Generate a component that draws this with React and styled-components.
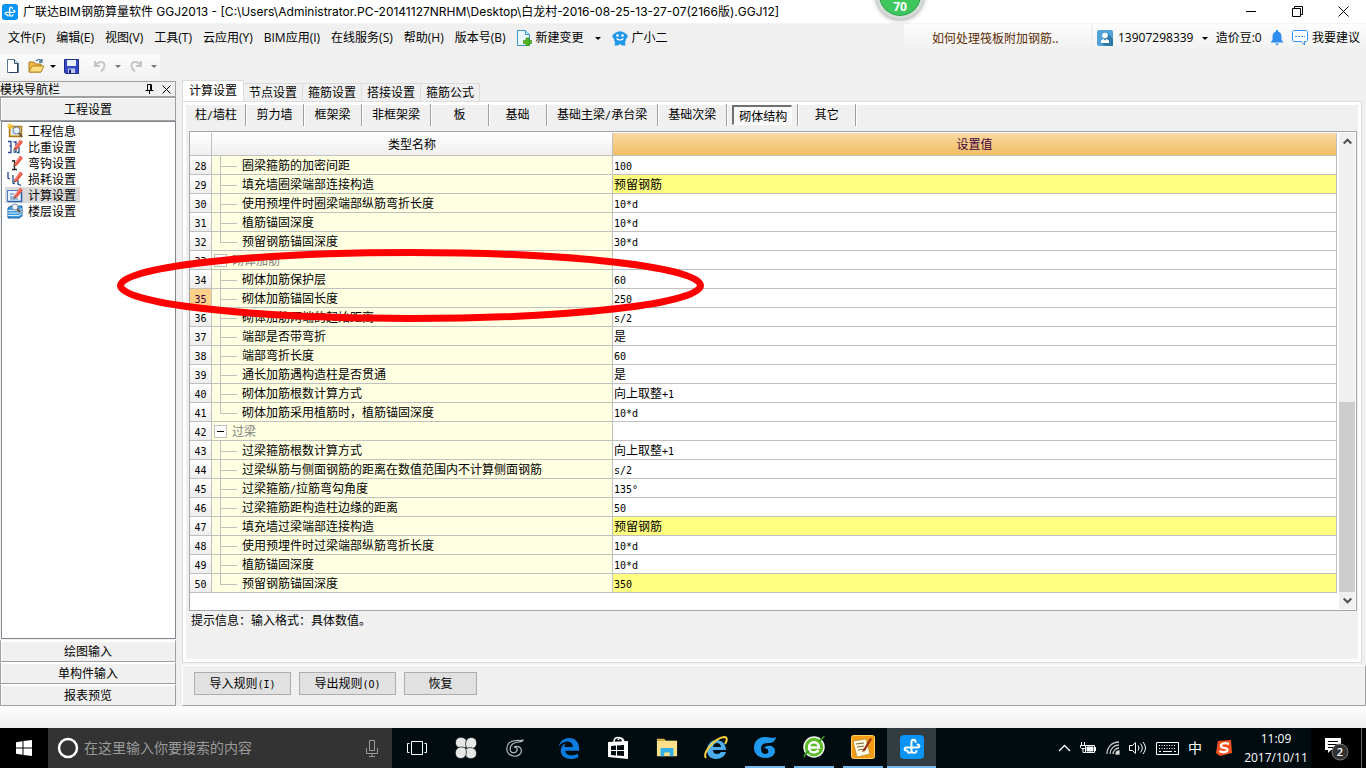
import React from "react";
import styled, { createGlobalStyle, css } from "styled-components";

const UI = '"Open Sans", "Noto Sans CJK SC", sans-serif';
const SONG = '"Noto Sans CJK SC", sans-serif';
const LINE = "#c0c0c0";

const Global = createGlobalStyle`
  * { box-sizing: border-box; }
  body { margin: 0; background: #f0f0f0; color: #000; font: 12px/16px ${SONG}; }
  button, input { font: inherit; color: inherit; border: 0; padding: 0; margin: 0; background: none; border-radius: 0; }
  button { white-space: nowrap; }
`;

const Page = styled.div`
  position: relative;
  display: flex;
  flex-direction: column;
  min-height: 100vh;
  overflow: hidden;
`;

const Svg = styled.svg`
  display: block;
  flex: none;
`;

const Mono = styled.span`
  font-family: "DejaVu Sans Mono", monospace;
  font-size: 10px;
  line-height: 10px;
`;

const Mixed = ({ children }) =>
  children.split(/([\x21-\x7e°]+)/).map((part, i) => (i % 2 ? <Mono key={i}>{part}</Mono> : part));

/* ---------- Title bar ---------- */

const TitleBar = styled.header`
  display: flex;
  align-items: center;
  height: 24px;
  padding-left: 2px;
  gap: 5px;
  background: #fff;
  border-bottom: 1px solid #f4f4f4;
`;

const Title = styled.h1`
  flex: 1;
  margin: 0;
  font: 400 12px/16px Inter, "Noto Sans CJK SC", sans-serif;
  white-space: nowrap;
`;

const WindowButton = styled.button`
  display: grid;
  place-items: center;
  width: 46px;
  height: 22px;
`;

const ScoreBadge = styled.div`
  position: absolute;
  top: -29px;
  left: 876px;
  width: 48px;
  height: 48px;
  padding-top: 27px;
  border: 3px solid #d4dcd6;
  border-radius: 50%;
  background: #3fc75f;
  box-shadow: 0 1px 5px rgba(0, 0, 0, 0.4), inset 0 0 0 1px #2a9a48;
  color: #fff;
  font: bold 12px/12px "Open Sans", sans-serif;
  text-align: center;
`;

/* ---------- Menu ---------- */

const MenuBar = styled.nav`
  display: flex;
  align-items: center;
  height: 28px;
  padding-left: 8px;
  font-family: ${UI};
`;

const MenuList = styled.div`
  display: flex;
  flex: 1;
  align-items: center;
  gap: 11px;
`;

const MenuButton = styled.button`
  display: flex;
  align-items: center;
  gap: ${(p) => p.$gap || 0}px;
`;

const Promo = styled.a`
  width: 187px;
  height: 28px;
  padding-left: 28px;
  line-height: 28px;
  background: linear-gradient(#fdfdfd, #f0f0f0);
  color: #5c2c04;
  font-family: ${SONG};
  text-decoration: none;
`;

const Account = styled.div`
  display: flex;
  align-items: center;
  justify-content: space-between;
  width: 273px;
  height: 28px;
  margin-left: 2px;
  padding: 0 6px 0 4px;
  background: linear-gradient(#fdfdfd, #f0f0f0);
`;

const Caret = styled.span`
  width: 0;
  height: 0;
  border: 3px solid transparent;
  border-top-color: ${(p) => p.$color || "#000"};
  border-bottom: 0;
`;

const ToolBar = styled.div`
  display: flex;
  align-items: center;
  align-self: flex-start;
  width: 160px;
  height: 24px;
  margin: 2px 0 2px;
  padding-left: 6px;
  background: linear-gradient(#fbfbfb, #f3f3f3);
`;

const ToolButton = styled.button`
  display: flex;
  align-items: center;
  gap: ${(p) => p.$gap || 5}px;
  margin-right: 8px;
`;

const ToolDivider = styled.span`
  width: 1px;
  height: 22px;
  margin: 0 8px 0 -2px;
  background: #a8a8a8;
`;

/* ---------- Side navigation ---------- */

const Workspace = styled.div`
  position: relative;
  display: flex;
  flex: 1;
  gap: 6px;
`;

const Side = styled.aside`
  display: flex;
  flex-direction: column;
  flex: none;
  width: 176px;
  padding-top: 1px;
`;

const SideTitle = styled.div`
  display: flex;
  align-items: center;
  height: 16px;
  padding-right: 4px;
  border: 1px solid #a0a0a0;
  border-left: 0;
  gap: 8px;
`;

const SideHeading = styled.h2`
  flex: 1;
  margin: 0;
  font: 12px/14px ${SONG};
`;

const SideTab = styled.button`
  height: ${(p) => (p.$tall ? 24 : 22)}px;
  padding-bottom: 1px;
  border: 1px solid #a0a0a0;
  border-top-color: ${(p) => (p.$tall ? "#a0a0a0" : "#fff")};
  box-shadow: inset 1px 1px #fff;
`;

const Tree = styled.ul`
  flex: 1;
  margin: 0 0 1px 1px;
  padding: 1px 0 0 3px;
  border: 1px solid #828790;
  background: #fff;
  list-style: none;
`;

const TreeItem = styled.button`
  display: flex;
  align-items: center;
  gap: 5px;
  height: 16px;
  padding: 0 4px 0 2px;
  background: ${(p) => (p.$active ? "#d9d9d9" : "transparent")};
  line-height: 16px;
`;

/* ---------- Main area ---------- */

const Main = styled.main`
  display: flex;
  flex: 1;
  flex-direction: column;
  min-width: 0;
`;

const Tabs = styled.div`
  display: flex;
  align-items: flex-end;
  height: 21px;
`;

const Tab = styled.button`
  height: ${(p) => (p.$active ? 21 : 18)}px;
  width: ${(p) => (p.$active ? 62 : 59)}px;
  padding-bottom: 2px;
  border: 1px solid #dcdcdc;
  border-left-width: ${(p) => (p.$active ? 1 : 0)}px;
  border-bottom: 0;
  background: ${(p) => (p.$active ? "#fff" : "#f0f0f0")};
  line-height: 16px;
`;

const TabPage = styled.section`
  display: flex;
  flex: 1;
  flex-direction: column;
  margin-right: 4px;
  padding: 0 4px;
  border: 1px solid #dcdcdc;
  box-shadow: inset 0 0 0 3px #fff;
`;

const SubTabs = styled.div`
  display: flex;
  align-items: center;
  height: 26px;
`;

const SubTabCell = styled.div`
  display: grid;
  place-items: center;
  min-width: 58px;
  height: 22px;
  padding: 0 ${(p) => (p.$active ? 5 : p.$tight ? 8 : 10)}px;
  border-right: 1px solid #a0a0a0;
  box-shadow: 1px 0 #fff;
`;

const SubTab = styled.button`
  height: 20px;
  padding-bottom: 2px;
  ${(p) =>
    p.$active &&
    css`
      padding: 0 4px 0 5px;
      border: 1px solid #fff;
      border-top: 2px solid #707070;
      border-left: 2px solid #707070;
      background: #f8f8f8;
    `}
`;

const Grid = styled.div`
  display: flex;
  flex: 1;
  align-items: stretch;
  margin: 3px 0 0 2px;
  padding: 1px 1px 1px 0;
  border: 1px solid #a5a5ad;
  background: #fff;
`;

const Table = styled.table`
  flex: 1;
  align-self: flex-start;
  table-layout: fixed;
  width: 100%;
  border-spacing: 0;
`;

const Th = styled.th`
  height: 23px;
  padding: 0;
  border-right: 1px solid ${LINE};
  border-bottom: 1px solid ${LINE};
  background: ${(p) => (p.$hot ? "linear-gradient(#fad9a4, #f0be62)" : "linear-gradient(#fff, #efefef)")};
  color: ${(p) => (p.$hot ? "#400040" : "#000")};
  font-weight: 400;
`;

const cell = css`
  height: 19px;
  padding: 0;
  border-right: 1px solid ${LINE};
  border-bottom: 1px solid ${LINE};
  line-height: 16px;
  white-space: nowrap;
`;

const RowNumber = styled.th`
  ${cell}
  background: ${(p) => (p.$hot ? "#ffd088" : "linear-gradient(#fff, #eee)")};
  color: ${(p) => (p.$hot ? "#400040" : "#000")};
  font-weight: 400;
  text-align: center;
`;

const NameCell = styled.td`
  ${cell}
  background: #ffffe1;
`;

const ValueCell = styled.td`
  ${cell}
  padding: 0 0 1px 1px;
  background: ${(p) => (p.$edited ? "#ffff80" : "#fff")};
`;

const NameLine = styled.div`
  display: flex;
  align-items: center;
  height: 18px;
  padding-left: ${(p) => (p.$group ? 2 : 8)}px;
  gap: 5px;
  color: ${(p) => (p.$group ? "#808080" : "#000")};
`;

const Branch = styled.span`
  width: 17px;
  height: 18px;

  &::before,
  &::after {
    display: block;
    height: 9px;
    border-left: 1px solid ${LINE};
    content: "";
  }
  &::before {
    height: 10px;
    border-bottom: 1px solid ${LINE};
  }
  &::after {
    height: 8px;
    border-left-color: ${(p) => (p.$last ? "transparent" : LINE)};
  }
`;

const Collapse = styled.button`
  display: grid;
  place-items: center;
  width: 13px;
  height: 13px;
  border: 1px solid ${LINE};
  background: #fff;
`;

const ScrollBar = styled.div`
  display: flex;
  flex: none;
  flex-direction: column;
  width: 16px;
  margin-left: 2px;
  background: #f0f0f0;
`;

const ScrollButton = styled.button`
  display: grid;
  place-items: center;
  height: 17px;
`;

const ScrollTrack = styled.div`
  display: flex;
  flex: 1;
  align-items: flex-end;
`;

const ScrollThumb = styled.div`
  width: 100%;
  height: 43%;
  background: #cdcdcd;
`;

const Hint = styled.p`
  height: 51px;
  margin: 0;
  padding: 1px 0 0 4px;
`;

const Actions = styled.footer`
  display: flex;
  gap: 8px;
  height: 41px;
  margin-top: 2px;
  padding: 6px 0 0 11px;
  border: 1px solid #a0a0a0;
  border-top-color: #fff;
  border-left-color: #fff;
`;

const ActionButton = styled.button`
  width: ${(p) => (p.$small ? 73 : 97)}px;
  height: 23px;
  padding-bottom: 2px;
  border: 1px solid #adadad;
  background: #e1e1e1;
`;

const Mark = styled.svg`
  position: absolute;
  top: 169px;
  left: 117px;
  width: 587px;
  height: 73px;
  pointer-events: none;
`;

const StatusBar = styled.div`
  height: 22px;
  background: linear-gradient(#fdfdfd, #f0f0f0);
`;

/* ---------- Taskbar ---------- */

const TaskBar = styled.footer`
  display: flex;
  height: 40px;
  background: #000c10;
  color: #fff;
  font-family: ${UI};
`;

const StartButton = styled.button`
  display: grid;
  place-items: center;
  width: 48px;
  background: #000;
`;

const Search = styled.label`
  display: flex;
  align-items: center;
  width: 344px;
  padding: 0 14px 0 9px;
  gap: 5px;
  background: #333;
`;

const SearchInput = styled.input`
  flex: 1;
  min-width: 0;
  font-size: 14px;
  outline: 0;

  &::placeholder {
    color: #9a9a9a;
    opacity: 1;
  }
`;

const Apps = styled.div`
  display: flex;
  flex: 1;
  gap: 5px;
`;

const AppGroup = styled.div`
  display: flex;
`;

const AppButton = styled.button`
  display: grid;
  place-items: center;
  width: 49px;
  height: 40px;
  background: ${(p) => (p.$active ? "#333c40" : "transparent")};
  ${(p) =>
    (p.$running || p.$active) &&
    css`
      grid-template-rows: 38px 2px;
      &::after {
        width: ${p.$active ? 49 : 40}px;
        height: 2px;
        background: #76b9ed;
        content: "";
      }
    `}
`;

const Tray = styled.div`
  display: flex;
  align-items: center;
`;

const TrayIcons = styled.div`
  display: flex;
  align-items: center;
  gap: 9px;
  margin-right: 9px;
`;

const TrayText = styled.span`
  margin-right: 5px;
  font-size: 14px;
`;

const Clock = styled.time`
  width: 70px;
  font: 12px/19px "Open Sans", sans-serif;
  text-align: center;
`;

const Notice = styled.button`
  display: flex;
  align-items: center;
  justify-content: flex-end;
  width: 50px;
  height: 40px;
  padding-right: 11px;
  background: #000;
`;

const ShowDesktop = styled.button`
  width: 5px;
  height: 40px;
  border-left: 1px solid #666;
  background: #000;
`;

/* ---------- Icons ---------- */

const BrandIcon = ({ size }) => (
  <Svg width={size} height={size} viewBox="0 0 24 24" fill="none" stroke="#fff" strokeWidth="2" strokeLinecap="round">
    <rect width="24" height="24" rx="4" fill="#0a94f5" stroke="none" />
    <path d="M15.500 7c0-3-4-3-4 0v8.500c0 3-4 3-4 .5M17.500 9.500c2.500 0 2.500 3 0 3h-11c-2.500 0-2.500 3 0 3M11.500 16c1 3 4.500 2.500 5 0" />
  </Svg>
);

const PageIcon = () => (
  <Svg width="14" height="16" viewBox="0 0 14 16">
    <path d="M1.500 1.500h7l4 4v9h-11z" fill="#fff" stroke="#5a7894" />
    <path d="M8.500 1.500v4h4" fill="#d4e4f2" stroke="#33556f" />
    <path d="M11.500 6v8.500H3" fill="none" stroke="#26425e" />
  </Svg>
);

const OpenIcon = () => (
  <Svg width="17" height="16" viewBox="0 0 17 16">
    <path d="M1 14V4h5l1 2h6v8z" fill="#f0bd42" stroke="#a8791b" />
    <path d="M1 14l3-6h12l-3 6z" fill="#ffdf80" stroke="#b38422" />
    <path d="M8 3q4-3 6 1m0-3v3h-3" fill="none" stroke="#4c7598" strokeWidth="1.300" />
  </Svg>
);

const SaveIcon = () => (
  <Svg width="15" height="15" viewBox="0 0 15 15">
    <path d="M.5.5h14v14h-13l-1-1z" fill="#3549c8" stroke="#202d86" />
    <path d="M3 1h9v6H3z" fill="#e8f0ff" />
    <path d="M4 9.500h7V14H4z" fill="#bfc9e8" />
    <path d="M5 10.500h2V14H5z" fill="#18236b" />
  </Svg>
);

const UndoIcon = ({ flip }) => (
  <Svg width="14" height="14" viewBox="0 0 14 14" transform={flip ? "scale(-1 1)" : undefined}>
    <path d="M2 2v5h5M2.500 6.500C5 1.500 11.500 2 11.500 6.500c0 3-2 4.500-3.500 6" fill="none" stroke="#c6c6c6" strokeWidth="2" />
  </Svg>
);

const ChangeIcon = () => (
  <Svg width="15" height="16" viewBox="0 0 15 16">
    <path d="M.5.5h8l4 4v11H.5z" fill="#eaf7ff" stroke="#3b94c9" />
    <path d="M8.500.5v4h4" fill="#bce3f8" stroke="#3b94c9" />
    <path d="M9 8h3v2.500h2.500v3H12V16H9v-2.500H6.500v-3H9z" fill="#52b51d" stroke="#2b8808" strokeWidth=".6" />
  </Svg>
);

const MascotIcon = () => (
  <Svg width="16" height="16" viewBox="0 0 16 16">
    <path d="M3 3q5-3.500 10 0l2.500 2v2.500L14 9q0 2-1 3l.5 3.500H10L8 14l-2 1.500H2.500L3 12Q2 11 2 9L.5 7.500V5z" fill="#2098e8" />
    <circle cx="5.500" cy="5.500" r="1.300" fill="#fff" />
    <circle cx="10.500" cy="5.500" r="1.300" fill="#fff" />
    <path d="M4.500 8.500q3.500 3 7 0" fill="none" stroke="#fff" strokeWidth="1.200" />
  </Svg>
);

const AvatarIcon = () => (
  <Svg width="16" height="16" viewBox="0 0 16 16">
    <rect width="16" height="16" rx="2" fill="#4fa3d8" />
    <path d="M11 4l5 5v7H8l-4-3z" fill="#2e7ba8" />
    <circle cx="8" cy="5.500" r="2.800" fill="#fff" />
    <path d="M4 13v-2.500L6.500 9 8 10.500 9.500 9l2.500 1.500V13z" fill="#fff" />
  </Svg>
);

const BellIcon = () => (
  <Svg width="14" height="16" viewBox="0 0 14 16" fill="#2f8cf0">
    <path d="M6 0h2v1.500q3.500 1 3.500 5V10l2 2.500H.5L2.500 10V6.500q0-4 3.500-5zM5 13.500h4L7 15.500z" />
  </Svg>
);

const BubbleIcon = () => (
  <Svg width="16" height="16" viewBox="0 0 16 16" fill="#fff" stroke="#2f8cf0">
    <path d="M1.500.5h13l1 1v9l-1 1h-2V15l-3-3.500h-8l-1-1v-9z" />
    <path d="M3 6.500h10" strokeDasharray="2 1" />
  </Svg>
);

const Pencil = () => (
  <>
    <path d="M7 9L13 .5 16 3 10 10.500z" fill="#ed5546" />
    <path d="M8.500 8L14 1.500" stroke="#ff9d8f" />
    <path d="M7 9l3 1.500L6 12z" fill="#7b5a48" />
  </>
);

const treeArt = {
  info: (
    <>
      <path d="M2.500 3.500h12v10h-12z" fill="#f3d27a" stroke="#ad7b1c" strokeWidth="1.500" />
      <path d="M4 12h9V6H4z" fill="#d8e8fa" />
      <circle cx="9.500" cy="7.500" r="3.500" fill="#e5f2ff" stroke="#69839c" />
      <path d="M12 10l3 4" stroke="#67503a" strokeWidth="2" />
      <path d="M3 0v6M0 3h6M1 1l4 4M5 1L1 5" stroke="#ffc629" />
    </>
  ),
  weight: (
    <>
      <path d="M1 2.500h3v4.500H2.500 4v6.500H1M6.500 3h2.500v10H6.500M12 8v5.500h-2" fill="none" stroke="#254a90" strokeWidth="1.300" />
      <Pencil />
    </>
  ),
  hook: (
    <>
      <path d="M7.500 5v9M5 14.500h5M5 6h3" fill="none" stroke="#222" strokeWidth="1.300" />
      <Pencil />
    </>
  ),
  loss: (
    <>
      <path d="M1 1v6l2 1M6 4v8l2 1M11 9v4l3 1.500" fill="none" stroke="#254a90" strokeWidth="1.300" />
      <Pencil />
    </>
  ),
  calc: (
    <>
      <rect x=".5" y="3.500" width="14" height="11" fill="#e8f1ff" stroke="#4b7cc0" />
      <path d="M3 7h4M3 10h3M3 12h8" stroke="#5178b0" />
      <path d="M14.500 5v9.500H1" fill="none" stroke="#2b62af" strokeWidth="1.500" />
      <Pencil />
    </>
  ),
  floor: (
    <>
      <path d="M1 5l3-2h11v10l-3 2H1z" fill="#429ade" stroke="#19619e" />
      <path d="M1 7.500h11l3-2M1 10h11l3-2M1 12.500h11l3-2" fill="none" stroke="#d6efff" />
      <circle cx="8" cy="4" r="3" fill="#eef6fc" stroke="#8194a7" />
      <path d="M10 6l3 3" stroke="#70563d" strokeWidth="2" />
    </>
  ),
};

const Chevron = ({ up }) => (
  <Svg width="9" height="7" viewBox="0 0 9 7" fill="none" stroke="#505050" strokeWidth="2">
    <path d={up ? "M.7 5.500l3.800-3.800 3.800 3.800" : "M.7 1.500l3.800 3.800 3.800-3.800"} />
  </Svg>
);

const taskArt = {
  view: (
    <g fill="none" stroke="#fff">
      <path d="M6.500 5.500h11v13h-11zM4.500 7.500h-2v9h2M19.500 7.500h2v9h-2" />
    </g>
  ),
  pinwheel: (
    <g fill="#e6e8e8" stroke="#000c10" strokeWidth=".7">
      <path d="M12 11.500C6 14 1 11 1.500 6 2 1.500 7 .5 10 2c3.500 2 3.500 6 2 9.500z" />
      <path d="M12.500 12C10 6 13 1 18 1.500c4.500.5 5.500 5.500 4 8.500-2 3.500-6 3.500-9.500 2z" />
      <path d="M12 12.500c6-2.500 11 .5 10.500 5.500-.5 4.500-5.500 5.500-8.500 4-3.500-2-3.500-6-2-9.500z" />
      <path d="M11.500 12c2.500 6-.5 11-5.500 10.500C1.500 22 .5 17 2 14c2-3.500 6-3.500 9.500-2z" />
    </g>
  ),
  swirl: (
    <g fill="none" stroke="#b9bfc0" strokeWidth="1.300">
      <path d="M21 3c-2 2-5 0-8 1C6 4 3 8 3 13c0 5 4 8 9 8 4 0 7-3 7-6 0-4-4-6-8-4 3 0 4 2 3 4-1 3-6 3-7 0-1-4 1-8 6-9 4-1 7 0 8-3z" />
    </g>
  ),
  edge: (
    <path
      d="M1 10C2 4 7 1 12 1c7 0 11 5 11 11v3H8c0 4 4 5 7 5 3 0 5-1 7-2v4c-2 1-5 2-8 2-7 0-11-4-11-9 0-4 2-7 6-8-1 1-2 2-2 4h9c0-4-2-6-6-6-4 0-7 2-9 5z"
      fill="#0b7be0"
    />
  ),
  store: (
    <>
      <path d="M8 6c0-6 8-6 9 0M12 4c1-3 5-3 6 2" fill="none" stroke="#fff" strokeWidth="1.500" />
      <path d="M2 6l20-1v18L2 21z" fill="#fff" />
      <path d="M5 10l5-.5V14H5zM11 9.500l7-.5v5h-7zM5 15h5v4.500L5 19zM11 15h7v5l-7-.5z" fill="#000c10" />
    </>
  ),
  folder: (
    <>
      <path d="M1 4V2h8l2 2z" fill="#e8b83c" />
      <path d="M1 4h22v17H1z" fill="#fde08a" />
      <path d="M5 12h14v9h-4v-4H9v4H5z" fill="#33b0ea" />
    </>
  ),
  ie: (
    <>
      <path
        d="M12 4c6 0 10 4 10 10H9c0 3 2 4 4 4s3-1 4-2h5c-1 4-5 7-10 7-6 0-9-4-9-9s4-10 9-10zM9 11h8c0-2-2-4-4-4s-4 2-4 4z"
        fill="#4cadee"
      />
      <path d="M2 22C-2 17 11 2 20 1c4 0 3 4 1 7" fill="none" stroke="#f7cf3b" strokeWidth="2" />
    </>
  ),
  g: (
    <path
      d="M23 2c-1 5-4 6-8 6-5 0-7 2-7 6 0 3 2 5 4 5 3 0 4-2 3-4 0-1-2-2-4-2 4-4 11-2 11 3 0 4-4 7-9 7C6 23 1 19 1 13 1 5 7 2 13 2c4 0 6 2 10 0z"
      fill="#1f9aee"
    />
  ),
  browser: (
    <>
      <circle cx="12" cy="12" r="10" fill="#5dbb2a" stroke="#f1f6ec" strokeWidth="1.500" />
      <path d="M7 12.500h10c0-7-10-7-10 0 0 6 7 6 9.500 2.500" fill="none" stroke="#fff" strokeWidth="2.400" />
      <path d="M2 22c1-4 3-5 5-6M17 6c3-2 5-3 5-5" fill="none" stroke="#36941b" strokeWidth="1.600" />
    </>
  ),
  notes: (
    <>
      <rect x=".5" y=".5" width="23" height="23" rx="2" fill="#f59c14" stroke="#ffcf65" />
      <path d="M2 6l13-2 4 15-13 3z" fill="#fffae2" stroke="#a87922" strokeWidth=".6" />
      <path d="M5 9l8-1M6 12l7-1M7 15l7-1" stroke="#756238" />
      <path d="M12 15l7-12 2 1-7 12-3 1z" fill="#9a3419" />
    </>
  ),
};

const TaskIcon = ({ name, size = 22 }) => (
  <Svg width={size} height={size} viewBox="0 0 24 24">
    {taskArt[name]}
  </Svg>
);

/* ---------- Data ---------- */

const menus = ["文件(F)", "编辑(E)", "视图(V)", "工具(T)", "云应用(Y)", "BIM应用(I)", "在线服务(S)", "帮助(H)", "版本号(B)"];
const tree = [
  ["info", "工程信息"],
  ["weight", "比重设置"],
  ["hook", "弯钩设置"],
  ["loss", "损耗设置"],
  ["calc", "计算设置"],
  ["floor", "楼层设置"],
];
const tabs = ["计算设置", "节点设置", "箍筋设置", "搭接设置", "箍筋公式"];
const subTabs = ["柱/墙柱", "剪力墙", "框架梁", "非框架梁", "板", "基础", "基础主梁/承台梁", "基础次梁", "砌体结构", "其它"];

const rows = [
  { n: 28, name: "圈梁箍筋的加密间距", value: "100" },
  { n: 29, name: "填充墙圈梁端部连接构造", value: "预留钢筋", edited: true },
  { n: 30, name: "使用预埋件时圈梁端部纵筋弯折长度", value: "10*d" },
  { n: 31, name: "植筋锚固深度", value: "10*d" },
  { n: 32, name: "预留钢筋锚固深度", value: "30*d", last: true },
  { n: 33, name: "砌体加筋", value: "", group: true },
  { n: 34, name: "砌体加筋保护层", value: "60" },
  { n: 35, name: "砌体加筋锚固长度", value: "250", current: true },
  { n: 36, name: "砌体加筋两端的起始距离", value: "s/2" },
  { n: 37, name: "端部是否带弯折", value: "是" },
  { n: 38, name: "端部弯折长度", value: "60" },
  { n: 39, name: "通长加筋遇构造柱是否贯通", value: "是" },
  { n: 40, name: "砌体加筋根数计算方式", value: "向上取整+1" },
  { n: 41, name: "砌体加筋采用植筋时，植筋锚固深度", value: "10*d", last: true },
  { n: 42, name: "过梁", value: "", group: true },
  { n: 43, name: "过梁箍筋根数计算方式", value: "向上取整+1" },
  { n: 44, name: "过梁纵筋与侧面钢筋的距离在数值范围内不计算侧面钢筋", value: "s/2" },
  { n: 45, name: "过梁箍筋/拉筋弯勾角度", value: "135°" },
  { n: 46, name: "过梁箍筋距构造柱边缘的距离", value: "50" },
  { n: 47, name: "填充墙过梁端部连接构造", value: "预留钢筋", edited: true },
  { n: 48, name: "使用预埋件时过梁端部纵筋弯折长度", value: "10*d" },
  { n: 49, name: "植筋锚固深度", value: "10*d" },
  { n: 50, name: "预留钢筋锚固深度", value: "350", edited: true, last: true },
];

/* ---------- Sections ---------- */

const Header = () => (
  <>
    <TitleBar>
      <BrandIcon size={16} />
      <Title>
        广联达BIM钢筋算量软件 GGJ2013 - [C:\Users\Administrator.PC-20141127NRHM\Desktop\白龙村-2016-08-25-13-27-07(2166版).GGJ12]
      </Title>
      <AppGroup>
        <WindowButton aria-label="最小化">
          <Svg width="11" height="11" stroke="#000"><path d="M0 5.500h10" /></Svg>
        </WindowButton>
        <WindowButton aria-label="还原">
          <Svg width="11" height="11" fill="none" stroke="#000"><path d="M.5 2.500h8v8h-8zM2.500 2.500v-2h8v8h-2" /></Svg>
        </WindowButton>
        <WindowButton aria-label="关闭">
          <Svg width="11" height="11" stroke="#000"><path d="M.5.5l10 10M10.500.5l-10 10" /></Svg>
        </WindowButton>
      </AppGroup>
    </TitleBar>
    <MenuBar>
      <MenuList>
        {menus.map((m) => (
          <MenuButton key={m}>{m}</MenuButton>
        ))}
        <MenuButton $gap={4}>
          <ChangeIcon />
          新建变更
        </MenuButton>
        <Caret />
        <MenuButton $gap={4}>
          <MascotIcon />
          广小二
        </MenuButton>
      </MenuList>
      <Promo href="#help">如何处理筏板附加钢筋..</Promo>
      <Account>
        <MenuButton $gap={5}>
          <AvatarIcon />
          13907298339
        </MenuButton>
        <Caret />
        <span>造价豆:0</span>
        <BellIcon />
        <MenuButton $gap={4}>
          <BubbleIcon />
          我要建议
        </MenuButton>
      </Account>
    </MenuBar>
    <ToolBar>
      <ToolButton aria-label="新建"><PageIcon /></ToolButton>
      <ToolButton aria-label="打开"><OpenIcon /><Caret /></ToolButton>
      <ToolButton aria-label="保存"><SaveIcon /></ToolButton>
      <ToolDivider />
      <ToolButton aria-label="撤销" $gap={8}><UndoIcon /><Caret $color="#777" /></ToolButton>
      <ToolButton aria-label="重做" $gap={8}><UndoIcon flip /><Caret $color="#777" /></ToolButton>
    </ToolBar>
  </>
);

const SideNav = () => (
  <Side>
    <SideTitle>
      <SideHeading>模块导航栏</SideHeading>
      <button aria-label="固定">
        <Svg width="9" height="10" fill="none" stroke="#000"><path d="M2.500 6V.5h4V6M5.500 0v6M.5 6.500h8M4.500 7v3" /></Svg>
      </button>
      <button aria-label="关闭导航">
        <Svg width="9" height="9" stroke="#000"><path d="M.5.5l8 8M8.500.5l-8 8" /></Svg>
      </button>
    </SideTitle>
    <SideTab $tall>工程设置</SideTab>
    <Tree>
      {tree.map(([icon, label]) => (
        <li key={icon}>
          <TreeItem $active={icon === "calc"}>
            <Svg width="16" height="16" viewBox="0 0 16 16">{treeArt[icon]}</Svg>
            {label}
          </TreeItem>
        </li>
      ))}
    </Tree>
    <SideTab>绘图输入</SideTab>
    <SideTab>单构件输入</SideTab>
    <SideTab>报表预览</SideTab>
  </Side>
);

const SettingsTable = () => (
  <Table>
    <colgroup>
      <col style={{ width: 22 }} />
      <col style={{ width: 401 }} />
      <col />
    </colgroup>
    <thead>
      <tr>
        <Th aria-label="行号" />
        <Th>类型名称</Th>
        <Th $hot>设置值</Th>
      </tr>
    </thead>
    <tbody>
      {rows.map((r) => (
        <tr key={r.n}>
          <RowNumber scope="row" $hot={r.current}><Mono>{r.n}</Mono></RowNumber>
          <NameCell>
            <NameLine $group={r.group}>
              {r.group ? (
                <Collapse aria-label="折叠">
                  <Svg width="7" height="1"><path d="M0 .5h7" stroke="#000" /></Svg>
                </Collapse>
              ) : (
                <Branch $last={r.last} />
              )}
              <span><Mixed>{r.name}</Mixed></span>
            </NameLine>
          </NameCell>
          <ValueCell $edited={r.edited}><Mixed>{r.value}</Mixed></ValueCell>
        </tr>
      ))}
    </tbody>
  </Table>
);

const Desktop = () => (
  <TaskBar>
    <StartButton aria-label="开始">
      <Svg width="16" height="16" viewBox="0 0 16 16" fill="#fff">
        <path d="M0 2.200L6.500 1.300v6.200H0zM7.500 1.100L16 0v7.500H7.500zM0 8.500h6.500v6.200L0 13.800zM7.500 8.500H16V16l-8.500-1.100z" />
      </Svg>
    </StartButton>
    <Search>
      <Svg width="22" height="22" fill="none" stroke="#fff" strokeWidth="2.500"><circle cx="11" cy="11" r="9" /></Svg>
      <SearchInput aria-label="搜索" placeholder="在这里输入你要搜索的内容" />
      <Svg width="12" height="17" fill="none" stroke="#9a9a9a"><path d="M3.500.5h5v10h-5zM.5 8v5.500h11V8M6 13.500v3M3 16.500h6" /></Svg>
    </Search>
    <Apps>
      <AppGroup>
        <AppButton aria-label="任务视图"><TaskIcon name="view" size={24} /></AppButton>
        <AppButton aria-label="应用"><TaskIcon name="pinwheel" size={24} /></AppButton>
        <AppButton aria-label="云助手"><TaskIcon name="swirl" /></AppButton>
      </AppGroup>
      <AppGroup>
        <AppButton aria-label="Edge"><TaskIcon name="edge" /></AppButton>
        <AppButton aria-label="应用商店"><TaskIcon name="store" size={24} /></AppButton>
        <AppButton aria-label="文件资源管理器"><TaskIcon name="folder" /></AppButton>
        <AppButton aria-label="Internet Explorer"><TaskIcon name="ie" size={24} /></AppButton>
        <AppButton aria-label="广联达" $running><TaskIcon name="g" size={24} /></AppButton>
        <AppButton aria-label="浏览器" $running><TaskIcon name="browser" size={24} /></AppButton>
        <AppButton aria-label="便笺" $running><TaskIcon name="notes" size={24} /></AppButton>
        <AppButton aria-label="钢筋算量" $active><BrandIcon size={24} /></AppButton>
      </AppGroup>
    </Apps>
    <Tray>
      <TrayIcons>
        <Svg width="13" height="8" fill="none" stroke="#fff" strokeWidth="1.300"><path d="M1 7l5.500-5.500L12 7" /></Svg>
        <Svg width="17" height="12" fill="none" stroke="#fff"><path d="M5.500 3.500h9v7h-9zM15.500 5v4M1.500 0v3M4.500 0v3M.5 3.500h5v2l-1 1h-3l-1-1zM3 7v3.500h2" /><path d="M7 5h6v4H7z" fill="#fff" /></Svg>
        <Svg width="14" height="14" fill="none" stroke="#ccc" strokeWidth="1.300"><path d="M1 13C1 6 6 1 13 1M4 13c0-5 4-9 9-9M7 13c0-3 3-6 6-6" /><path d="M10 13a3 3 0 013-3v3z" fill="#fff" /></Svg>
        <Svg width="18" height="14" fill="none" stroke="#fff"><path d="M.5 4.500h3l3-3v11l-3-3h-3zM9 4.500q2 2.500 0 5M11.500 2.500q3.500 4.500 0 9M14 1q5 6 0 12" /></Svg>
        <Svg width="23" height="13" fill="none" stroke="#fff"><path d="M.5.5h22v12H.5z" /><path d="M3 3.500h17M3 6.500h17" strokeDasharray="1 1.500" /><path d="M3 9.500h2M7 9.500h9M18 9.500h2" /></Svg>
        <TrayText>中</TrayText>
        <Svg width="16" height="16" viewBox="0 0 16 16"><path d="M2 1l13-1 1 13-12 3L0 13z" fill="#f4511e" /><path d="M13 4C9 2 4 4 5 6.500 6 9 11 7 11.500 9.500 12 12 7 13 3.500 11" fill="none" stroke="#fff" strokeWidth="2.200" /></Svg>
      </TrayIcons>
      <Clock>11:09<br />2017/10/11</Clock>
      <Notice aria-label="2 条通知">
        <Svg width="26" height="26" viewBox="0 0 26 26">
          <path d="M1 3h16v12H7l-3 3v-3H1z" fill="#fff" />
          <path d="M4 6.500h10M4 9.500h10M4 12.500h5" stroke="#000" />
          <circle cx="16" cy="17" r="8" fill="#333" stroke="#777" />
          <text x="16" y="21" fill="#fff" fontFamily="Open Sans" fontSize="11" fontWeight="600" textAnchor="middle">2</text>
        </Svg>
      </Notice>
      <ShowDesktop aria-label="显示桌面" />
    </Tray>
  </TaskBar>
);

export default function App() {
  return (
    <Page>
      <Global />
      <Header />
      <ScoreBadge>70</ScoreBadge>
      <Workspace>
        <SideNav />
        <Main>
          <Tabs>
            {tabs.map((t, i) => (
              <Tab key={t} $active={i === 0}>{t}</Tab>
            ))}
          </Tabs>
          <TabPage>
            <SubTabs>
              {subTabs.map((t, i) => {
                const active = t === "砌体结构";
                return (
                  <SubTabCell key={t} $active={active} $tight={i === 0}>
                    <SubTab $active={active}><Mixed>{t}</Mixed></SubTab>
                  </SubTabCell>
                );
              })}
            </SubTabs>
            <Grid>
              <SettingsTable />
              <ScrollBar>
                <ScrollButton aria-label="向上滚动"><Chevron up /></ScrollButton>
                <ScrollTrack><ScrollThumb /></ScrollTrack>
                <ScrollButton aria-label="向下滚动"><Chevron /></ScrollButton>
              </ScrollBar>
            </Grid>
            <Hint>提示信息：输入格式：具体数值。</Hint>
          </TabPage>
          <Actions>
            <ActionButton><Mixed>导入规则(I)</Mixed></ActionButton>
            <ActionButton><Mixed>导出规则(O)</Mixed></ActionButton>
            <ActionButton $small>恢复</ActionButton>
          </Actions>
        </Main>
        <Mark viewBox="0 0 587 73" fill="none" stroke="#f00" strokeWidth="7">
          <ellipse cx="293.500" cy="36.500" rx="290" ry="33" />
        </Mark>
      </Workspace>
      <StatusBar />
      <Desktop />
    </Page>
  );
}
